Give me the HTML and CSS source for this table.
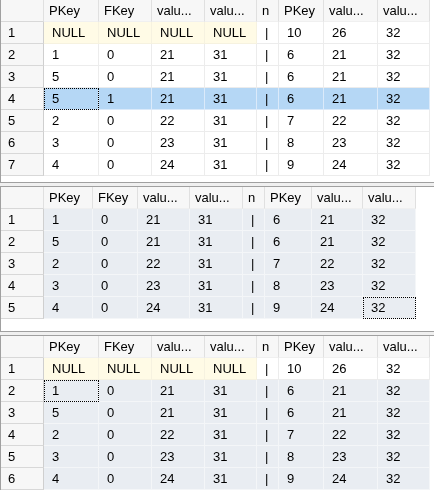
FILE: index.html
```html
<!DOCTYPE html>
<html>
<head>
<meta charset="utf-8">
<link rel="stylesheet" href="styles.css">
</head>
<body>
<div class="results">
  <div class="pane first">
    <div class="grid g1">
      <div class="row head"><div class="c rh"></div><div class="c">PKey</div><div class="c">FKey</div><div class="c">valu...</div><div class="c">valu...</div><div class="c">n</div><div class="c">PKey</div><div class="c">valu...</div><div class="c">valu...</div></div>
      <div class="row nullrow"><div class="c rh">1</div><div class="c">NULL</div><div class="c">NULL</div><div class="c">NULL</div><div class="c">NULL</div><div class="c plain">|</div><div class="c plain">10</div><div class="c plain">26</div><div class="c plain">32</div></div>
      <div class="row"><div class="c rh">2</div><div class="c">1</div><div class="c">0</div><div class="c">21</div><div class="c">31</div><div class="c">|</div><div class="c">6</div><div class="c">21</div><div class="c">32</div></div>
      <div class="row"><div class="c rh">3</div><div class="c">5</div><div class="c">0</div><div class="c">21</div><div class="c">31</div><div class="c">|</div><div class="c">6</div><div class="c">21</div><div class="c">32</div></div>
      <div class="row sel"><div class="c rh">4</div><div class="c focus">5</div><div class="c">1</div><div class="c">21</div><div class="c">31</div><div class="c">|</div><div class="c">6</div><div class="c">21</div><div class="c">32</div></div>
      <div class="row"><div class="c rh">5</div><div class="c">2</div><div class="c">0</div><div class="c">22</div><div class="c">31</div><div class="c">|</div><div class="c">7</div><div class="c">22</div><div class="c">32</div></div>
      <div class="row"><div class="c rh">6</div><div class="c">3</div><div class="c">0</div><div class="c">23</div><div class="c">31</div><div class="c">|</div><div class="c">8</div><div class="c">23</div><div class="c">32</div></div>
      <div class="row"><div class="c rh">7</div><div class="c">4</div><div class="c">0</div><div class="c">24</div><div class="c">31</div><div class="c">|</div><div class="c">9</div><div class="c">24</div><div class="c">32</div></div>
    </div>
  </div>
  <div class="splitter"></div>
  <div class="pane second">
    <div class="grid g2 grey">
      <div class="row head"><div class="c rh"></div><div class="c">PKey</div><div class="c">FKey</div><div class="c">valu...</div><div class="c">valu...</div><div class="c">n</div><div class="c">PKey</div><div class="c">valu...</div><div class="c">valu...</div></div>
      <div class="row"><div class="c rh">1</div><div class="c">1</div><div class="c">0</div><div class="c">21</div><div class="c">31</div><div class="c">|</div><div class="c">6</div><div class="c">21</div><div class="c">32</div></div>
      <div class="row"><div class="c rh">2</div><div class="c">5</div><div class="c">0</div><div class="c">21</div><div class="c">31</div><div class="c">|</div><div class="c">6</div><div class="c">21</div><div class="c">32</div></div>
      <div class="row"><div class="c rh">3</div><div class="c">2</div><div class="c">0</div><div class="c">22</div><div class="c">31</div><div class="c">|</div><div class="c">7</div><div class="c">22</div><div class="c">32</div></div>
      <div class="row"><div class="c rh">4</div><div class="c">3</div><div class="c">0</div><div class="c">23</div><div class="c">31</div><div class="c">|</div><div class="c">8</div><div class="c">23</div><div class="c">32</div></div>
      <div class="row"><div class="c rh">5</div><div class="c">4</div><div class="c">0</div><div class="c">24</div><div class="c">31</div><div class="c">|</div><div class="c">9</div><div class="c">24</div><div class="c focus">32</div></div>
    </div>
  </div>
  <div class="splitter"></div>
  <div class="pane third">
    <div class="grid g1 grey">
      <div class="row head"><div class="c rh"></div><div class="c">PKey</div><div class="c">FKey</div><div class="c">valu...</div><div class="c">valu...</div><div class="c">n</div><div class="c">PKey</div><div class="c">valu...</div><div class="c">valu...</div></div>
      <div class="row nullrow"><div class="c rh">1</div><div class="c">NULL</div><div class="c">NULL</div><div class="c">NULL</div><div class="c">NULL</div><div class="c plain">|</div><div class="c plain">10</div><div class="c plain">26</div><div class="c plain">32</div></div>
      <div class="row"><div class="c rh">2</div><div class="c focus">1</div><div class="c">0</div><div class="c">21</div><div class="c">31</div><div class="c">|</div><div class="c">6</div><div class="c">21</div><div class="c">32</div></div>
      <div class="row"><div class="c rh">3</div><div class="c">5</div><div class="c">0</div><div class="c">21</div><div class="c">31</div><div class="c">|</div><div class="c">6</div><div class="c">21</div><div class="c">32</div></div>
      <div class="row"><div class="c rh">4</div><div class="c">2</div><div class="c">0</div><div class="c">22</div><div class="c">31</div><div class="c">|</div><div class="c">7</div><div class="c">22</div><div class="c">32</div></div>
      <div class="row"><div class="c rh">5</div><div class="c">3</div><div class="c">0</div><div class="c">23</div><div class="c">31</div><div class="c">|</div><div class="c">8</div><div class="c">23</div><div class="c">32</div></div>
      <div class="row"><div class="c rh">6</div><div class="c">4</div><div class="c">0</div><div class="c">24</div><div class="c">31</div><div class="c">|</div><div class="c">9</div><div class="c">24</div><div class="c">32</div></div>
    </div>
  </div>
</div>
</body>
</html>
```
FILE: styles.css
```css
html, body {
  margin: 0;
  padding: 0;
  background: #ffffff;
}
body {
  font-family: "Liberation Sans", Arial, sans-serif;
  font-size: 13px;
  color: #000;
  width: 434px;
  height: 495px;
  overflow: hidden;
  -webkit-font-smoothing: antialiased;
}
.results {
  display: flex;
  flex-direction: column;
  will-change: transform;
}
.pane {
  background: #ffffff;
  border-left: 1px solid #a0a0a0;
  border-top: 1px solid #a0a0a0;
  border-bottom: 1px solid #a0a0a0;
}
.pane.first {
  margin-top: -1px;
  height: 184px;
  box-sizing: border-box;
}
.pane.second {
  height: 146px;
  box-sizing: border-box;
}
.pane.third {
  border-bottom: none;
  flex: 1;
}
.splitter {
  height: 3px;
  background: #f0f0f0;
}
.grid {
  display: flex;
  flex-direction: column;
}
.row {
  display: grid;
  height: 22px;
}
.g1 .row {
  grid-template-columns: 43px 55px 53px 53px 52px 22px 45px 54px 52px;
}
.g2 .row {
  grid-template-columns: 43px 49px 45px 52px 53px 22px 47px 51px 53px;
}
.c {
  box-sizing: border-box;
  height: 22px;
  line-height: 21px;
  padding-left: 8px;
  border-right: 1px solid #ececec;
  border-bottom: 1px solid #ececec;
  white-space: nowrap;
  overflow: hidden;
}
.head .c {
  padding-left: 5px;
  background: #f7f7f7;
  border-right: 1px solid #e0e0e0;
  border-bottom: 1px solid #f0f0f0;
  color: #000;
}
.c.rh {
  padding-left: 7px;
  background: #f7f7f7;
  border-right: 1px solid #cfcfcf;
  border-bottom: 1px solid #d8d8d8;
}
.head .c.rh {
  border-right: 1px solid #e0e0e0;
}
.grey .row:not(.head) .c:not(.rh) {
  background: #e9edf2;
  border-color: #f4f6f8;
}
.nullrow .c:not(.rh) {
  background: #fffbe6 !important;
  border-color: #f6f2e0 !important;
}
.nullrow .c.plain {
  background: #ffffff !important;
  border-color: #ececec !important;
}
.grey .nullrow .c.plain {
  background: #ffffff !important;
}
.sel .c:not(.rh) {
  background: #b5d7f5;
  border-right-color: #dbeafa;
  border-bottom-color: #dbeafa;
}
.c.focus {
  outline: 1px dotted #000;
  outline-offset: -1px;
}
```
